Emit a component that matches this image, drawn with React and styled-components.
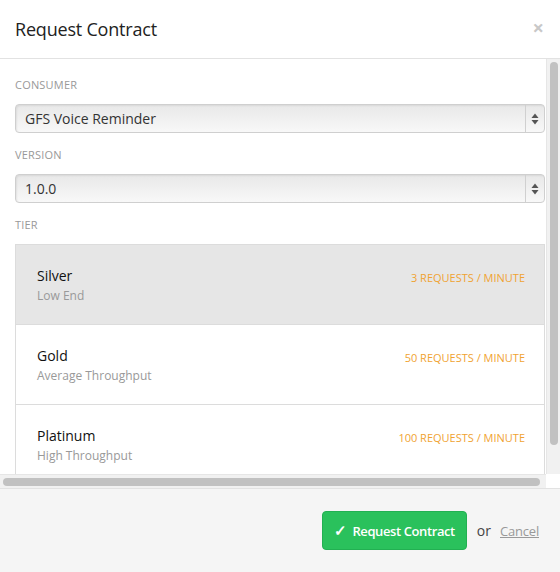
import React from "react";
import styled, { createGlobalStyle } from "styled-components";

const GlobalStyle = createGlobalStyle`
  html, body {
    margin: 0;
    padding: 0;
    background: #fff;
  }
  body {
    font-family: "Open Sans", "Noto Sans", sans-serif;
    color: #222;
  }
`;

const Modal = styled.div`
  width: 560px;
  height: 572px;
  display: flex;
  flex-direction: column;
  background: #fff;
  overflow: hidden;
`;

const Header = styled.div`
  height: 58px;
  flex: none;
  display: flex;
  align-items: center;
  justify-content: space-between;
  padding: 0 16px 0 15px;
  border-bottom: 1px solid #e2e2e2;
`;

const Title = styled.h3`
  margin: 0;
  font-size: 18px;
  font-weight: 400;
  color: #222;
  letter-spacing: -0.2px;
`;

const Close = styled.span`
  font-size: 20px;
  font-weight: 700;
  color: #c8c8c8;
  line-height: 1;
  margin-top: -2px;
`;

const Body = styled.div`
  flex: 1;
  min-height: 0;
  display: flex;
  flex-direction: column;
`;

const BodyMain = styled.div`
  flex: 1;
  min-height: 0;
  display: flex;
`;

const Viewport = styled.div`
  flex: 1;
  overflow: hidden;
`;

const VTrack = styled.div`
  width: 14px;
  flex: none;
  background: #f1f1f1;
  border-left: 1px solid #e6e6e6;
  box-sizing: border-box;
  padding: 3px 2px 0 3px;
`;

const VThumb = styled.div`
  width: 8px;
  height: 383px;
  border-radius: 4px;
  background: #c1c1c1;
`;

const HRow = styled.div`
  height: 14px;
  flex: none;
  display: flex;
`;

const HTrack = styled.div`
  flex: 1;
  background: #f1f1f1;
  border-top: 1px solid #e6e6e6;
  box-sizing: border-box;
  padding: 3px 0 0 3px;
`;

const HThumb = styled.div`
  width: 537px;
  height: 8px;
  border-radius: 4px;
  background: #c1c1c1;
`;

const Corner = styled.div`
  width: 14px;
  background: #fff;
`;

const Content = styled.div`
  width: 530px;
  padding: 18px 0 14px 15px;
`;

const Label = styled.div`
  font-size: 11px;
  line-height: 15px;
  color: #999;
  text-transform: uppercase;
  letter-spacing: 0.2px;
  margin-bottom: 12px;
`;

const Select = styled.div`
  height: 29px;
  box-sizing: border-box;
  display: flex;
  align-items: stretch;
  border: 1px solid #cfcfcf;
  border-radius: 4px;
  background: linear-gradient(#e8e8e8, #f8f8f8);
  box-shadow: inset 1px 1px 2px rgba(0, 0, 0, 0.07);
  margin-bottom: 14px;
`;

const SelectValue = styled.div`
  flex: 1;
  display: flex;
  align-items: center;
  padding-left: 9px;
  font-size: 14px;
  color: #333;
`;

const SelectArrows = styled.div`
  width: 18px;
  border-left: 1px solid #d0d0d0;
  display: flex;
  align-items: center;
  justify-content: center;
`;

const TierList = styled.div`
  border: 1px solid #dcdcdc;
  border-bottom: none;
`;

const Tier = styled.div`
  box-sizing: content-box;
  display: flex;
  align-items: flex-start;
  justify-content: space-between;
  padding: 22px 19px 0 21px;
  height: 57px;
  border-bottom: 1px solid #dcdcdc;
  background: ${(p) => (p.selected ? "#e6e6e6" : "#fff")};
`;

const TierName = styled.div`
  font-size: 14px;
  line-height: 18px;
  color: #111;
  margin-bottom: 3px;
`;

const TierDesc = styled.div`
  font-size: 12px;
  line-height: 16px;
  color: #999;
`;

const Rate = styled.div`
  font-size: 11px;
  line-height: 15px;
  color: #f0a332;
  text-transform: uppercase;
  margin-top: 3px;
`;

const Footer = styled.div`
  height: 84px;
  flex: none;
  display: flex;
  align-items: center;
  justify-content: flex-end;
  padding: 0 21px 0 0;
  background: #f5f5f5;
  border-top: 1px solid #e2e2e2;
  box-sizing: border-box;
`;

const Button = styled.button`
  height: 39px;
  padding: 0 11px 0 11px;
  display: flex;
  align-items: center;
  gap: 6px;
  border: 1px solid #22b052;
  border-radius: 4px;
  background: #2ac15c;
  color: #fff;
  font-family: inherit;
  font-size: 13px;
  font-weight: 600;
  letter-spacing: -0.4px;
  margin-right: 10px;
`;

const Check = styled.span`
  font-size: 15px;
  font-weight: 700;
  line-height: 1;
`;

const Or = styled.span`
  font-size: 14px;
  color: #444;
  margin-right: 9px;
`;

const Cancel = styled.a`
  font-size: 13px;
  color: #999;
  text-decoration: underline;
  letter-spacing: -0.2px;
`;

const Arrows = () => (
  <svg width="8" height="12" viewBox="0 0 8 12">
    <path d="M4 0.5 L7.5 5 L0.5 5 Z" fill="#555" />
    <path d="M4 11.5 L7.5 7 L0.5 7 Z" fill="#555" />
  </svg>
);

const tiers = [
  { name: "Silver", desc: "Low End", rate: "3 Requests / Minute", selected: true },
  { name: "Gold", desc: "Average Throughput", rate: "50 Requests / Minute" },
  { name: "Platinum", desc: "High Throughput", rate: "100 Requests / Minute" },
];

const App = () => (
  <Modal>
    <GlobalStyle />
    <Header>
      <Title>Request Contract</Title>
      <Close>×</Close>
    </Header>
    <Body>
      <BodyMain>
        <Viewport>
          <Content>
            <Label>Consumer</Label>
            <Select>
              <SelectValue>GFS Voice Reminder</SelectValue>
              <SelectArrows>
                <Arrows />
              </SelectArrows>
            </Select>
            <Label>Version</Label>
            <Select>
              <SelectValue>1.0.0</SelectValue>
              <SelectArrows>
                <Arrows />
              </SelectArrows>
            </Select>
            <Label>Tier</Label>
            <TierList>
              {tiers.map((t) => (
                <Tier key={t.name} selected={t.selected}>
                  <div>
                    <TierName>{t.name}</TierName>
                    <TierDesc>{t.desc}</TierDesc>
                  </div>
                  <Rate>{t.rate}</Rate>
                </Tier>
              ))}
            </TierList>
          </Content>
        </Viewport>
        <VTrack>
          <VThumb />
        </VTrack>
      </BodyMain>
      <HRow>
        <HTrack>
          <HThumb />
        </HTrack>
        <Corner />
      </HRow>
    </Body>
    <Footer>
      <Button>
        <Check>✓</Check>
        Request Contract
      </Button>
      <Or>or</Or>
      <Cancel>Cancel</Cancel>
    </Footer>
  </Modal>
);

export default App;
